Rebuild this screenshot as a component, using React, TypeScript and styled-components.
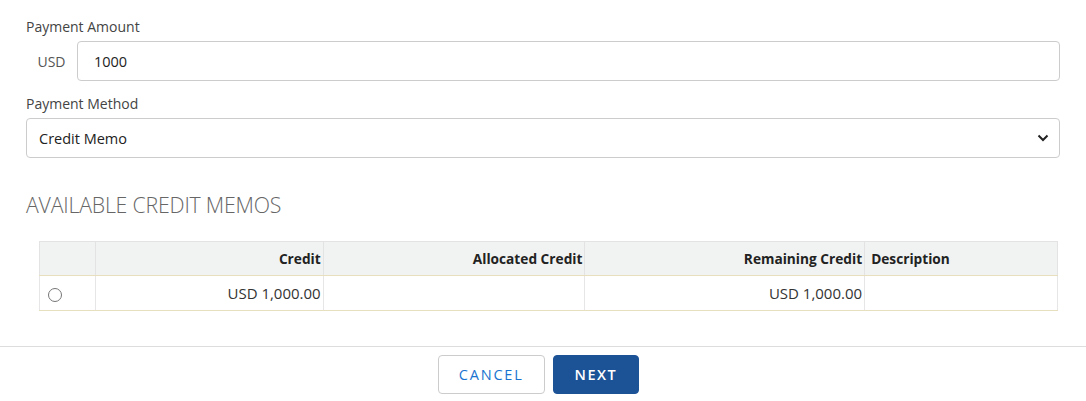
import styled, { createGlobalStyle } from "styled-components";

const GlobalStyle = createGlobalStyle`
  html, body {
    margin: 0;
    padding: 0;
    background: #fff;
    font-family: "Open Sans", "Segoe UI", sans-serif;
    color: #333;
  }
  * { box-sizing: border-box; }
`;

const Page = styled.div`
  width: 1086px;
  height: 401px;
  overflow: hidden;
  display: flex;
  flex-direction: column;
`;

const Form = styled.div`
  padding: 17px 26px 0 26px;
  display: flex;
  flex-direction: column;
`;

const Label = styled.label`
  font-size: 14px;
  line-height: 20px;
  color: #444;
  margin-bottom: 4px;
`;

const AmountRow = styled.div`
  display: flex;
  align-items: center;
  margin-bottom: 13px;
`;

const Prefix = styled.span`
  width: 51px;
  text-align: center;
  font-size: 14px;
  color: #555;
`;

const Input = styled.div`
  flex: 1;
  height: 40px;
  border: 1px solid #ccc;
  border-radius: 4px;
  padding: 0 16px;
  display: flex;
  align-items: center;
  font-size: 14.5px;
  color: #222;
`;

const Select = styled.div`
  height: 40px;
  border: 1px solid #ccc;
  border-radius: 4px;
  padding: 0 10px 0 12px;
  display: flex;
  align-items: center;
  justify-content: space-between;
  font-size: 14.5px;
  color: #222;
`;

const Heading = styled.h2`
  margin: 33px 0 0 0;
  font-size: 21.3px;
  line-height: 28px;
  font-weight: 300;
  color: #666;
  letter-spacing: -0.2px;
`;

const Table = styled.table`
  margin: 22px 0 0 39px;
  border-collapse: collapse;
  width: 1019px;
  font-size: 13.7px;
`;

const Th = styled.th<{ $w: number; $align?: string }>`
  width: ${(p) => p.$w}px;
  height: 34px;
  background: #f1f3f2;
  border: 1px solid #e2e3e2;
  border-bottom: 1px solid #e8dfbf;
  text-align: ${(p) => p.$align || "right"};
  padding: 0 ${(p) => (p.$align === "left" ? "6px" : "2px")};
  font-weight: 700;
  color: #222;
`;

const Td = styled.td<{ $align?: string }>`
  height: 35px;
  border-left: 1px solid #e6e6e6;
  border-right: 1px solid #e6e6e6;
  border-bottom: 1px solid #e8dfbf;
  text-align: ${(p) => p.$align || "right"};
  padding: 0 2px;
  font-size: 15px;
  color: #333;
`;

const Radio = styled.span`
  display: inline-block;
  width: 14px;
  height: 14px;
  border-radius: 50%;
  border: 1px solid #767676;
  margin-left: 6px;
  vertical-align: middle;
`;

const Footer = styled.div`
  margin-top: 35px;
  border-top: 1px solid #ddd;
  display: flex;
  justify-content: center;
  gap: 8px;
  padding: 8px 9px 0 0;
`;

const Button = styled.button<{ $primary?: boolean }>`
  height: 39px;
  padding: 0 ${(p) => (p.$primary ? "21px" : "20px")};
  border-radius: 4px;
  font-family: "Open Sans", sans-serif;
  font-size: 14.5px;
  letter-spacing: ${(p) => (p.$primary ? "1.5px" : "1.8px")};
  border: 1px solid ${(p) => (p.$primary ? "#1c5296" : "#ccc")};
  background: ${(p) => (p.$primary ? "#1c5296" : "#fff")};
  color: ${(p) => (p.$primary ? "#fff" : "#1a73d0")};
  font-weight: ${(p) => (p.$primary ? 600 : 400)};
`;

const Chevron = () => (
  <svg width="12" height="8" viewBox="0 0 12 8">
    <path d="M1.5 1.5 L6 6 L10.5 1.5" fill="none" stroke="#222" strokeWidth="2" />
  </svg>
);

export default function App() {
  return (
    <Page>
      <GlobalStyle />
      <Form>
        <Label>Payment Amount</Label>
        <AmountRow>
          <Prefix>USD</Prefix>
          <Input>1000</Input>
        </AmountRow>
        <Label>Payment Method</Label>
        <Select>
          <span>Credit Memo</span>
          <Chevron />
        </Select>
        <Heading>AVAILABLE CREDIT MEMOS</Heading>
      </Form>
      <Table>
        <thead>
          <tr>
            <Th $w={56}></Th>
            <Th $w={228}>Credit</Th>
            <Th $w={262}>Allocated Credit</Th>
            <Th $w={280}>Remaining Credit</Th>
            <Th $w={193} $align="left">Description</Th>
          </tr>
        </thead>
        <tbody>
          <tr>
            <Td $align="left"><Radio /></Td>
            <Td>USD 1,000.00</Td>
            <Td></Td>
            <Td>USD 1,000.00</Td>
            <Td></Td>
          </tr>
        </tbody>
      </Table>
      <Footer>
        <Button>CANCEL</Button>
        <Button $primary>NEXT</Button>
      </Footer>
    </Page>
  );
}
